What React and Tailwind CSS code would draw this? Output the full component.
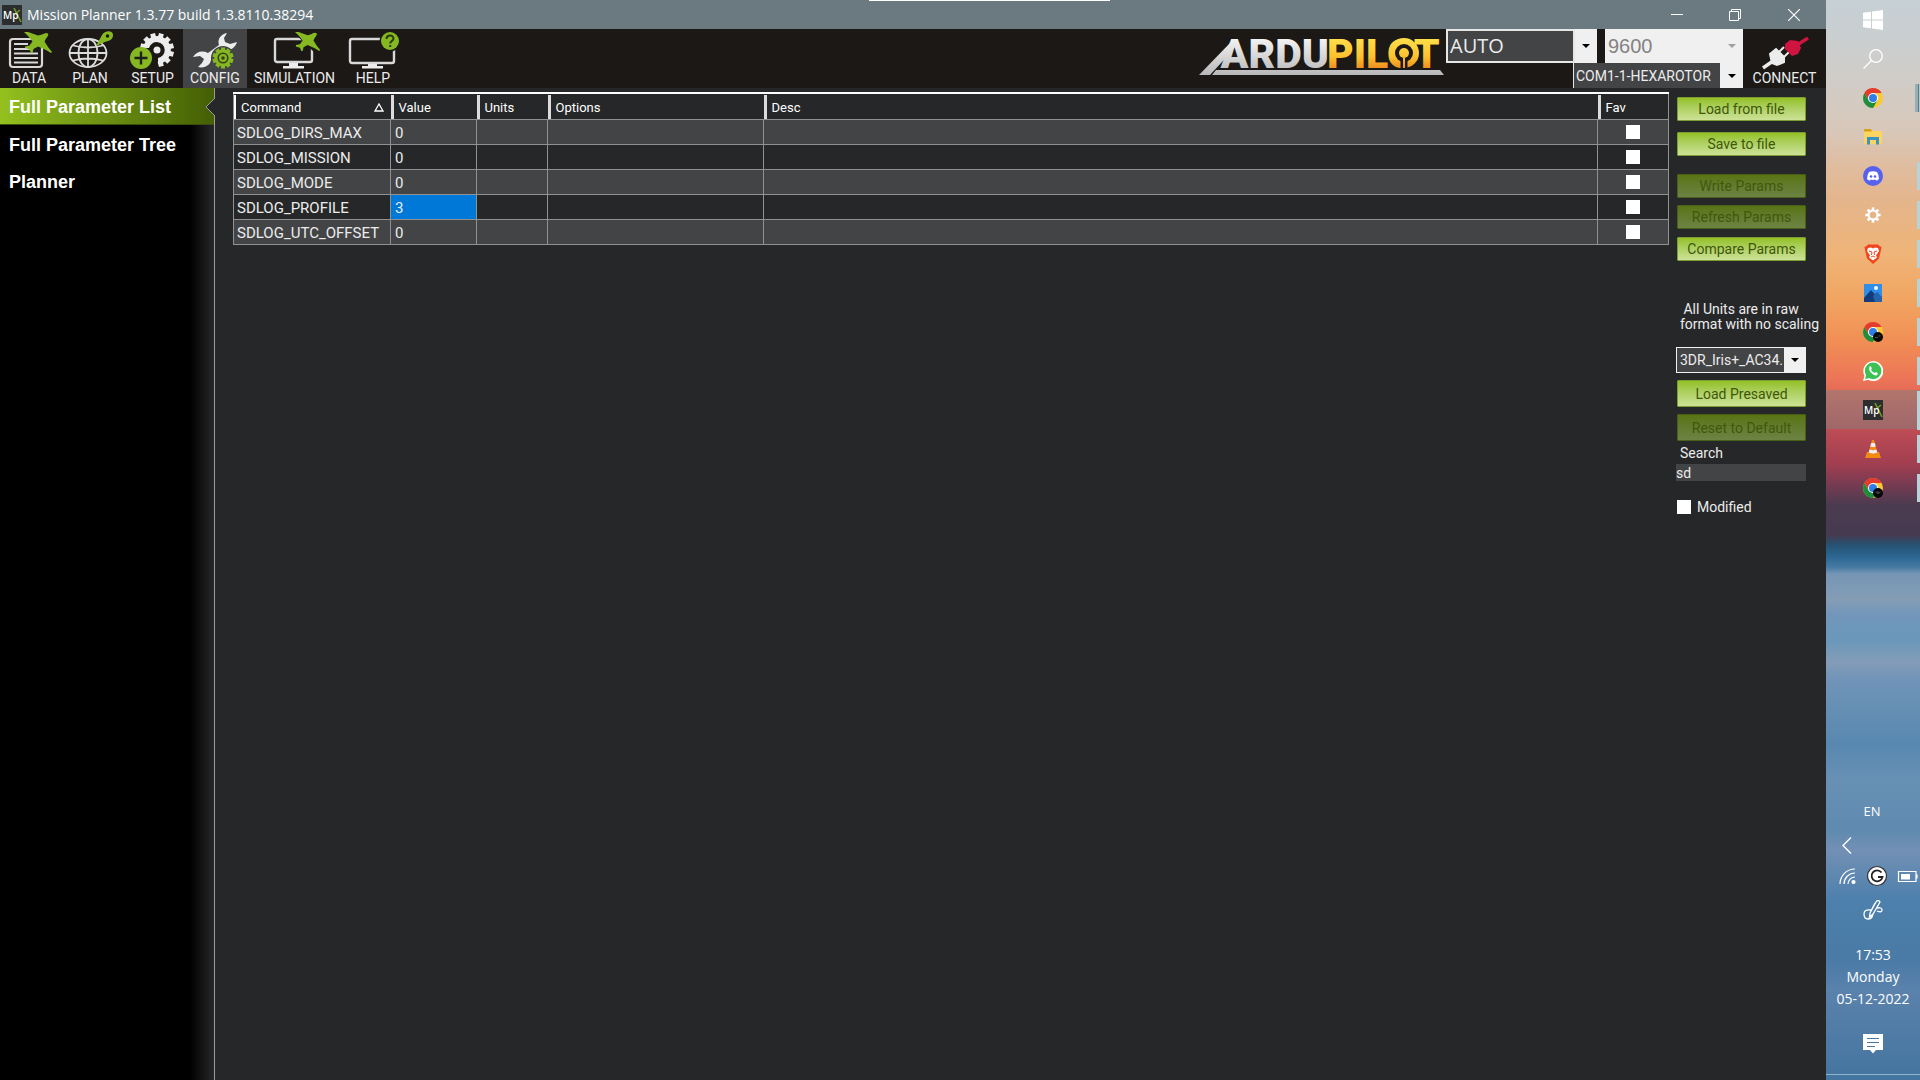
import React from "react";

const rows = [
  ["SDLOG_DIRS_MAX", "0"],
  ["SDLOG_MISSION", "0"],
  ["SDLOG_MODE", "0"],
  ["SDLOG_PROFILE", "3"],
  ["SDLOG_UTC_OFFSET", "0"],
];

const Plane = ({ x, y, s = 1 }) => (
  <g transform={`translate(${x} ${y}) scale(${s})`} fill="#86b822">
    <path d="M0 0 L4 0 L14 3.500 L18 2.500 Q22 0 24 1.500 Q25 3 22 6.500 L20.500 9.500 L24 15 L28 20 L27 21 L22 18 L14 14.500 L9.500 17 L8.500 21 L7 21 L5.500 17.500 L1 16 L1 14.500 L5.500 13.500 L8.500 9.500 L4 4 Z" />
  </g>
);

const teeth = (n, r, w, h) =>
  Array.from({ length: n }, (_, i) => (
    <rect key={i} x={-w / 2} y={-r - h} width={w} height={h + 1.5} transform={`rotate(${(360 / n) * i})`} />
  ));

const DataIcon = () => (
  <svg width="46" height="40" viewBox="0 0 46 40" aria-hidden="true">
    <rect x="4" y="8" width="32" height="28" rx="3" fill="none" stroke="#d8d8d8" strokeWidth="2.200" />
    <path d="M8 13h14M8 18h19M8 22.500h24M8 27h24M8 31.500h24" stroke="#d8d8d8" strokeWidth="1.800" />
    <Plane x={18} y={1} />
  </svg>
);

const PlanIcon = () => (
  <svg width="46" height="40" viewBox="0 0 46 40" fill="none" aria-hidden="true">
    <g stroke="#dcdcdc" strokeWidth="1.800">
      <ellipse cx="21" cy="22" rx="18.500" ry="14" />
      <ellipse cx="21" cy="22" rx="9.500" ry="14" />
      <path d="M21 8v28M2.500 22h37M6 14.500q15 4 30 0M6 29.500q15 -4 30 0" />
    </g>
    <path d="M29 15 L35 4 C38 -1 46 -1 46 4 C46 8 43 10 39 10.500 Z" fill="#86b822" />
    <circle cx="40.500" cy="5" r="1.800" fill="#1b1816" />
  </svg>
);

const SetupIcon = () => (
  <svg width="46" height="40" viewBox="0 0 46 40" aria-hidden="true">
    <g transform="translate(27 19)" fill="#ececec">
      <path d="M-14 -2 A14 14 0 1 1 1 14 L1 8 A8 8 0 1 0 -8 -2 Z" />
      {[-75, -45, -15, 15, 45, 75, 105, 135, 165].map((a) => (
        <rect key={a} x="-2.500" y="-17" width="5" height="5" transform={`rotate(${a})`} />
      ))}
      <circle r="3.500" />
    </g>
    <circle cx="11" cy="27" r="11" fill="#86b822" />
    <path d="M11 20.500v13M4.500 27h13" stroke="#1f1f1c" strokeWidth="2.400" />
  </svg>
);

const ConfigIcon = () => (
  <svg width="46" height="40" viewBox="0 0 46 40" aria-hidden="true">
    <path
      d="M35 2 C29 3 25 8 27 14 L16 22 C10 19 4 21 1 26 L8 25 L12 28 L10 32 L6 36 C13 38 20 33 19 27 L30 18 C36 21 43 18 45 11 L38 13 L33 11 L32 7 Z"
      fill="#ececec"
    />
    <g transform="translate(31 27)">
      <circle r="12" fill="#434446" />
      <g fill="#86b822">
        <circle r="8.500" />
        {teeth(10, 8, 4, 2.5)}
      </g>
      <circle r="4.800" fill="none" stroke="#39421c" strokeWidth="1.600" />
      <circle r="1.800" fill="#39421c" />
    </g>
  </svg>
);

const SimIcon = () => (
  <svg width="50" height="40" viewBox="0 0 50 40" aria-hidden="true">
    <rect x="5" y="8" width="37" height="23" rx="2" fill="none" stroke="#d8d8d8" strokeWidth="2.400" />
    <path d="M19 32h9v3h6v2.500h-21v-2.500h6z" fill="#ececec" />
    <path d="M27 0 L50 22" stroke="#1b1816" strokeWidth="7" />
    <Plane x={25} y={1} s={0.9} />
  </svg>
);

const HelpIcon = () => (
  <svg width="52" height="40" viewBox="0 0 52 40" aria-hidden="true">
    <rect x="3" y="8" width="44" height="24" rx="2" fill="none" stroke="#d8d8d8" strokeWidth="2.400" />
    <path d="M21 33h9v2h6v2.500h-21v-2.500h6z" fill="#ececec" />
    <circle cx="43" cy="10" r="10.500" fill="#1b1816" />
    <circle cx="43" cy="10" r="9" fill="#86b822" />
    <path d="M39.500 8c0-4.500 7-4.500 7-.5 0 2.500-3.300 2.500-3.300 5M43.200 14v2" fill="none" stroke="#2c3a10" strokeWidth="2" />
  </svg>
);

const PlugIcon = () => (
  <svg width="50" height="34" viewBox="0 0 50 34" aria-hidden="true">
    <path d="M3 31 L13 24" stroke="#ececec" strokeWidth="3.500" />
    <path d="M10 17 L16 12 L24 20 L24 25 L17 28 L12 26 Z" fill="#ececec" stroke="#ececec" strokeWidth="2" />
    <path d="M19 15 L24 10 M24 20 L29 15" stroke="#ececec" strokeWidth="2" />
    <path d="M25 7 L30 3 L38 4 L41 11 L38 17 L32 19 L25 12 Z" fill="#cf1440" />
    <path d="M37 8 L48 1" stroke="#cf1440" strokeWidth="3.500" />
  </svg>
);

const Logo = () => (
  <svg width="248" height="56" viewBox="0 -8 248 56" role="img" aria-label="ArduPilot" fontFamily="Roboto, sans-serif" fontWeight="900" fontSize="41">
    <defs>
      <linearGradient id="gold" gradientUnits="userSpaceOnUse" x1="0" y1="1" x2="0" y2="32">
        <stop offset="0" stopColor="#ffe04a" />
        <stop offset="0.600" stopColor="#fbc22e" />
        <stop offset="1" stopColor="#f08a1e" />
      </linearGradient>
      <linearGradient id="silver" gradientUnits="userSpaceOnUse" x1="0" y1="1" x2="0" y2="38">
        <stop offset="0" stopColor="#f4f4f4" />
        <stop offset="1" stopColor="#b8b8ba" />
      </linearGradient>
    </defs>
    <path d="M1 38 L33 5 L40 2 L34 14 L12 38 Z M18 33 H242 L246 38 H14 Z" fill="url(#silver)" />
    <text x="131" y="31" textAnchor="end" fill="url(#silver)">ARDU</text>
    <text x="129" y="31" fill="url(#gold)">PILOT</text>
    <circle cx="206" cy="16" r="15" fill="url(#gold)" />
    <circle cx="206" cy="16" r="9" fill="#1b1816" />
    <path d="M206 16 V32" stroke="#1b1816" strokeWidth="7" />
    <circle cx="206" cy="16" r="5" fill="url(#gold)" />
    <rect x="205" y="21" width="2" height="10" fill="url(#gold)" />
  </svg>
);

const MpIcon = () => (
  <svg width="20" height="20" viewBox="0 0 20 20" aria-hidden="true">
    <rect width="20" height="20" fill="#2b2d2e" />
    <path d="M12 3 L19 17 M13 9 L18 5" stroke="#6f9a26" strokeWidth="1.600" />
    <text x="1" y="14" fontSize="10" fontWeight="600" fill="#fff" fontFamily="Open Sans, sans-serif">Mp</text>
  </svg>
);

const Chrome = ({ badge }) => (
  <svg width="20" height="20" viewBox="0 0 20 20" aria-hidden="true">
    <circle cx="10" cy="10" r="10" fill="#fcc934" />
    <path d="M10 5 H18.660 A10 10 0 0 0 1.340 5 L5.670 12.500 Z" fill="#e33b2e" />
    <path d="M1.340 5 A10 10 0 0 0 10 20 L14.330 12.500 H5.670 Z" fill="#1e8e3e" />
    <circle cx="10" cy="10" r="5" fill="#fff" />
    <circle cx="10" cy="10" r="4" fill="#2f7de8" />
    {badge && (
      <>
        <circle cx="15" cy="15" r="5" fill="#080808" />
        <path d={badge === 1 ? "M12 15.500h3M15.500 14h2" : "M12.500 14q2.500 3 5 0M14 14h2"} stroke="#666" strokeWidth="0.800" fill="none" />
      </>
    )}
  </svg>
);

const taskIcons = [
  <svg width="20" height="20" viewBox="0 0 20 20" fill="#fff" aria-hidden="true">
    <path d="M0 2.800 L8 1.700 V9.500 H0Z M9 1.500 L20 0 V9.500 H9Z M0 10.500 H8 V18.300 L0 17.200Z M9 10.500 H20 V20 L9 18.500Z" />
  </svg>,
  <svg width="20" height="20" viewBox="0 0 20 20" fill="none" stroke="#fff" strokeWidth="1.300" aria-hidden="true">
    <circle cx="13" cy="7" r="6.300" />
    <path d="M8.500 11.500 L0.500 19.500" />
  </svg>,
  <Chrome />,
  <svg width="20" height="20" viewBox="0 0 20 20" aria-hidden="true">
    <path d="M1 2 H8 L9.500 4 H19 V17 H1Z" fill="#fbd560" />
    <path d="M1 2 H8 L9 4.500 H1Z" fill="#d9a013" />
    <path d="M4 17.500 V10 H16 V17.500 H13 V13 H7 V17.500Z" fill="#3b93c8" />
  </svg>,
  <svg width="20" height="20" viewBox="0 0 20 20" aria-hidden="true">
    <circle cx="10" cy="10" r="10" fill="#5661ee" />
    <path d="M6 6 Q10 4.500 14 6 Q16 9 16 13 Q14.500 14.500 13 14.600 L12.300 13.600 Q10 14.200 7.700 13.600 L7 14.600 Q5.500 14.500 4 13 Q4 9 6 6Z" fill="#fff" />
    <circle cx="8" cy="10.500" r="1.300" fill="#5661ee" />
    <circle cx="12" cy="10.500" r="1.300" fill="#5661ee" />
  </svg>,
  <svg width="20" height="20" viewBox="-10 -10 20 20" aria-hidden="true">
    <circle r="4.600" fill="none" stroke="#fff" strokeWidth="1.800" />
    <g fill="#fff">{teeth(8, 5, 2.6, 2.6)}</g>
  </svg>,
  <svg width="20" height="20" viewBox="0 0 20 20" aria-hidden="true">
    <path d="M5 0.500 H15 L16.500 2 L18.500 3 L18 6 L16 14.500 L10 20 L4 14.500 L2 6 L1.500 3 L3.500 2Z" fill="#f3451d" />
    <path d="M5 4 L8 3.500 L10 4.500 L12 3.500 L15 4 L16 7 L13 11.500 L14 13.500 L10 16.500 L6 13.500 L7 11.500 L4 7Z" fill="#fff" />
    <path d="M6 7 L9 8 L8.500 11 M14 7 L11 8 L11.500 11 M8 13 L10 12 L12 13" fill="none" stroke="#f3451d" strokeWidth="1" />
  </svg>,
  <svg width="20" height="20" viewBox="0 0 20 20" aria-hidden="true">
    <path d="M1 1 H19 V19 H1Z" fill="#2f8fe8" />
    <path d="M1 15 L8 7 L19 19 H1Z" fill="#123d7c" />
    <path d="M10 13 L14 9 L19 14 V19 H12Z" fill="#2563ad" />
    <circle cx="13" cy="5" r="2" fill="#f3f8ff" />
  </svg>,
  <Chrome badge={1} />,
  <svg width="20" height="20" viewBox="0 0 20 20" aria-hidden="true">
    <path d="M0 20 L1.500 14.800 A10 10 0 1 1 5.200 18.700Z" fill="#fff" />
    <circle cx="10.100" cy="9.900" r="8.300" fill="#3cc254" />
    <path d="M2 18 L3.500 13 L7 17Z" fill="#3cc254" />
    <path d="M6.500 5.500 Q8 4.500 8.700 7 Q9 8 8 8.700 Q9.300 11 11.600 12 L12.600 11 Q15.500 12 14.500 13.500 Q13 15.500 9.500 13 Q5 9.500 6.500 5.500Z" fill="#fff" />
  </svg>,
  <MpIcon />,
  <svg width="20" height="20" viewBox="0 0 20 20" aria-hidden="true">
    <path d="M4 13 H16 L18 19 H2Z" fill="#f28a12" />
    <path d="M9 1 H11 L14.500 14 Q10 16.500 5.500 14Z" fill="#f08a1c" />
    <path d="M8.200 4 H11.800 L12.700 7.500 Q10 8.500 7.300 7.500Z M6.600 10.500 Q10 12 13.400 10.500 L14.300 13.500 Q10 15.500 5.700 13.500Z" fill="#eee" />
  </svg>,
  <Chrome badge={2} />,
];
const taskNames = ["Start", "Search", "Chrome", "File Explorer", "Discord", "Settings", "Brave", "Photos", "Chrome profile 2", "WhatsApp", "Mission Planner", "VLC", "Chrome profile 3"];

const tools = [
  ["DATA", <DataIcon />, "w-[58px]"],
  ["PLAN", <PlanIcon />, "w-[64px]"],
  ["SETUP", <SetupIcon />, "w-[61px]"],
  ["CONFIG", <ConfigIcon />, "w-[64px] bg-[#434446]"],
  ["SIMULATION", <SimIcon />, "w-[95px]"],
  ["HELP", <HelpIcon />, "w-[62px]"],
];

const Arrow = ({ className = "text-black" }) => (
  <svg width="8" height="4" viewBox="0 0 8 4" className={className} aria-hidden="true">
    <path d="M0 0H8L4 4Z" fill="currentColor" />
  </svg>
);

function Combo({ label, value, box, select, arrow, disabled }) {
  return (
    <div className={`flex ${box}`}>
      <select aria-label={label} disabled={disabled} className={`min-w-0 flex-1 appearance-none overflow-hidden whitespace-nowrap opacity-100 outline-none ${select}`}>
        <option>{value}</option>
      </select>
      <span className={`flex shrink-0 items-center justify-center bg-[#f0f0f0] ${arrow}`}>
        <Arrow className={disabled ? "text-[#a0a0a0]" : "text-black"} />
      </span>
    </div>
  );
}

function GreenButton({ children, className, disabled }) {
  return (
    <button
      type="button"
      disabled={disabled}
      className={`block w-[129px] rounded-[1px] border text-sm leading-4 ${
        disabled
          ? "border-[#4a5f1a] bg-linear-to-b from-[#587410] to-[#6d8344] text-[#40580b]"
          : "border-[#7c9c34] bg-linear-to-b from-[#94c11f] to-[#cde296] text-[#40570a]"
      } ${className}`}
    >
      {children}
    </button>
  );
}

function Th({ children, className = "", first }) {
  return (
    <th scope="col" className={`h-[26px] border-b border-[#919191] p-0 text-left font-normal ${className}`}>
      <div className={`mt-px flex h-[24px] items-center justify-between pt-px pr-[7px] pl-[5px] ${first ? "border-l-2 border-white" : "border-l-3 border-[#dcdcdc]"}`}>
        {children}
      </div>
    </th>
  );
}

export default function App() {
  return (
    <div className="flex min-h-screen bg-[#262729] font-[Roboto,'Liberation_Sans',sans-serif] text-[#ececec]">
      <div className="flex min-w-0 flex-1 flex-col">
        <header className="relative flex h-[29px] items-center bg-[#6a7a80] pl-[2px] text-white">
          <MpIcon />
          <h1 className="ml-[5px] flex-1 font-['Open_Sans',sans-serif] text-sm">Mission Planner 1.3.77 build 1.3.8110.38294</h1>
          <div className="absolute top-0 left-[869px] h-px w-[241px] bg-white" />
          <button type="button" aria-label="Minimize" className="flex h-full w-[62px] items-center justify-center">
            <svg width="12" height="12" viewBox="0 0 12 12" stroke="#fff"><path d="M0 5.500h12" /></svg>
          </button>
          <button type="button" aria-label="Restore" className="flex h-full w-[54px] items-center justify-center">
            <svg width="12" height="12" viewBox="0 0 12 12" fill="none" stroke="#fff"><path d="M0.500 2.500h9v9h-9zM2.500 2.500v-2h9v9h-2" /></svg>
          </button>
          <button type="button" aria-label="Close" className="flex h-full w-[64px] items-center justify-center">
            <svg width="12" height="12" viewBox="0 0 12 12" stroke="#fff" strokeWidth="1.200"><path d="M0 0L12 12M12 0L0 12" /></svg>
          </button>
        </header>

        <div className="flex h-[59px] bg-[#1b1816]">
          <nav className="flex flex-1">
            {tools.map(([name, icon, cls]) => (
              <button key={name} type="button" className={`flex flex-col items-center pt-[2px] text-sm ${cls}`}>
                {icon}
                <span className="leading-[14px]">{name}</span>
              </button>
            ))}
          </nav>
          <div><Logo /></div>
          <div className="flex w-[297px] flex-col items-end">
            <div className="flex w-full justify-between">
              <Combo
                label="Connection"
                value="AUTO"
                box="h-[34px] w-[151px]"
                select="border-2 border-[#e6e6e6] bg-[#434446] pl-[2px] font-['Open_Sans',sans-serif] text-xl leading-7"
                arrow="w-[22px]"
              />
              <Combo label="Baud rate" value="9600" disabled box="h-[34px] w-[138px] bg-[#f0f0f0]" select="pl-[3px] font-['Liberation_Sans',sans-serif] text-xl text-[#838383]" arrow="w-[22px]" />
            </div>
            <Combo
              label="Vehicle"
              value="COM1-1-HEXAROTOR"
              box="h-[25px] w-[170px]"
              select="border-l border-[#e6e6e6] bg-[#434446] pl-[2px] text-sm"
              arrow="w-[23px]"
            />
          </div>
          <button type="button" className="flex w-[83px] flex-col items-center pt-2 text-sm">
            <PlugIcon />
            <span className="leading-[14px]">CONNECT</span>
          </button>
        </div>

        <div className="flex flex-1">
          <aside className="w-[215px] border-r border-[#9a9a9a] bg-[linear-gradient(to_right,#000_190px,#262729)] font-['Liberation_Sans',sans-serif] text-lg font-bold text-white">
            <a href="#list" className="relative flex h-[37px] items-center border-b border-[#3b4d10] bg-linear-to-r from-[#94c11f] to-[#445f05] pl-[9px] pt-px">
              Full Parameter List
              <svg width="10" height="18" viewBox="0 0 10 18" className="absolute -right-px top-[10px]">
                <path d="M10 0L1 9L10 18Z" fill="#262729" />
                <path d="M10 0L1 9L10 18" fill="none" stroke="#9a9a9a" />
              </svg>
            </a>
            <a href="#tree" className="flex h-[38px] items-center pl-[9px] pt-px">Full Parameter Tree</a>
            <a href="#planner" className="flex h-[37px] items-center pl-[9px] pt-px">Planner</a>
          </aside>

          <main className="flex min-w-0 flex-1 items-start pl-[18px]">
            <table className="mt-1 min-w-0 flex-1 table-fixed border-collapse border border-[#919191] text-[15px]">
              <thead className="border-t-2 border-white text-[13px] text-white">
                <tr>
                  <Th first className="w-[157px]">
                    Command
                    <svg width="10" height="9" viewBox="0 0 10 9" fill="none" stroke="#fff" strokeWidth="1.300"><path d="M1 8L5 1L9 8Z" /></svg>
                  </Th>
                  <Th className="w-[86px]">Value</Th>
                  <Th className="w-[71px]">Units</Th>
                  <Th className="w-[216px]">Options</Th>
                  <Th>Desc</Th>
                  <Th className="w-[71px]">Fav</Th>
                </tr>
              </thead>
              <tbody>
                {rows.map(([name, value], i) => (
                  <tr key={name} className={`h-[25px] ${i % 2 ? "bg-[#262729]" : "bg-[#434446]"}`}>
                    <td className="border border-[#919191] pt-px pb-0 pl-[3px] leading-5">{name}</td>
                    <td className={`border border-[#919191] pt-px pb-0 pl-1 leading-5 ${value === "3" ? "bg-[#0078d7]" : ""}`}>{value}</td>
                    <td className="border border-[#919191]" />
                    <td className="border border-[#919191]" />
                    <td className="border border-[#919191]" />
                    <td className="border border-[#919191] p-0">
                      <input type="checkbox" aria-label={`Favourite ${name}`} className="mx-auto block size-[14px] appearance-none bg-white" />
                    </td>
                  </tr>
                ))}
              </tbody>
            </table>

            <section className="flex w-[157px] shrink-0 flex-col pl-2 pt-[9px]">
              <GreenButton className="h-6">Load from file</GreenButton>
              <GreenButton className="mt-[11px] h-6">Save to file</GreenButton>
              <GreenButton disabled className="mt-[18px] h-6">Write Params</GreenButton>
              <GreenButton disabled className="mt-[7px] h-6">Refresh Params</GreenButton>
              <GreenButton className="mt-[8px] h-6">Compare Params</GreenButton>
              <p className="mt-[41px] whitespace-pre pl-[3px] text-sm leading-[15px]">{" All Units are in raw\nformat with no scaling"}</p>
              <Combo
                label="Presaved parameters"
                value="3DR_Iris+_AC34."
                box="mt-[15px] -ml-px h-[26px] w-[130px] border border-[#f0f0f0]"
                select="bg-[#434446] pl-[3px] text-sm"
                arrow="w-[21px]"
              />
              <GreenButton className="mt-[7px] h-[27px]">Load Presaved</GreenButton>
              <GreenButton disabled className="mt-[7px] h-[27px]">Reset to Default</GreenButton>
              <label htmlFor="search" className="mt-[2px] pl-[3px] text-sm leading-5">Search</label>
              <input id="search" type="text" defaultValue="sd" className="mt-px -ml-px h-[17px] w-[130px] bg-[#434446] text-sm leading-4 outline-none" />
              <label className="mt-[16px] flex items-center gap-[6px] text-sm leading-5">
                <input type="checkbox" className="size-[14px] appearance-none bg-white" />
                Modified
              </label>
            </section>
          </main>
        </div>
      </div>

      <aside className="flex w-[94px] shrink-0 flex-col bg-[linear-gradient(to_bottom,#c5d0d6_0px,#cfcdca_70px,#d8c8ba_130px,#dfbda0_165px,#e4b58c_200px,#efb477_255px,#f1a561_300px,#f18f55_340px,#ec7457_380px,#d35c56_410px,#b84a54_435px,#a03e50_465px,#763b52_485px,#4b3b50_505px,#463a50_535px,#27506f_544px,#2a6590_556px,#457aa2_567px,#7696b6_574px,#849db5_600px,#7296ba_615px,#6a98ba_640px,#839cb8_662px,#7094b8_680px,#5888b0_745px,#6890b5_780px,#5f8ab0_830px,#7290b4_850px,#4d80ac_900px,#4a7aa6_960px,#5a82ac_990px,#44759f_1080px)] font-['Open_Sans',sans-serif] text-white">
        <nav>
          {taskIcons.map((icon, i) => (
            <button
              key={taskNames[i]}
              type="button"
              aria-label={taskNames[i]}
              className={`relative flex h-[39px] w-full items-center justify-center ${i > 1 ? "pt-px" : ""} ${i === 10 ? "bg-[#808080]/50" : ""}`}
            >
              {icon}
              {i === 2 && <span className="absolute right-0 h-7 w-[5px] border-r border-[#b8c8cc] bg-[linear-gradient(to_right,#97aeb4_3px,#4f7f8c_3px)]" />}
              {i > 3 && <span className={`absolute right-0 w-[3px] bg-[#b5d3d8] ${i === 10 ? "h-full" : "h-7"}`} />}
            </button>
          ))}
        </nav>
        <div className="mt-auto flex flex-col items-center pb-5 text-sm leading-[22px]">
          <span className="pr-[2px] text-[13px]">EN</span>
          <svg width="94" height="24" viewBox="0 0 94 24" fill="none" stroke="#fff" strokeWidth="1.400" className="mt-3" aria-hidden="true">
            <path d="M25 3.500L17 11.500L25 19.500" />
          </svg>
          <svg width="94" height="24" viewBox="0 0 94 24" fill="none" stroke="#fff" strokeWidth="1.200" className="mt-[6px]" aria-hidden="true">
            <path d="M14 20A15 15 0 0 1 29 5M18 20A11 11 0 0 1 29 9M22 20A7 7 0 0 1 29 13" />
            <circle cx="27.500" cy="18" r="1.500" fill="#fff" />
            <circle cx="51" cy="12" r="9.500" fill="#fff" stroke="#333" />
            <path d="M55.500 8.500A5.500 5.500 0 1 0 56.500 13H52" stroke="#222" strokeWidth="1.800" />
            <path d="M72.500 7.500H90V17.500H72.500ZM91 10.500V14.500" />
            <path d="M75 10H84V15.500H75Z" fill="#fff" stroke="none" />
          </svg>
          <svg width="20" height="20" viewBox="0 0 20 20" fill="none" stroke="#fff" strokeWidth="1.300" className="mt-3" aria-hidden="true">
            <path d="M7 13L13 2Q15 -1 17 2L10 14L6.500 17ZM12 3L7 13M8 10Q1 9 1 14Q1 19 5 19Q9 19 10 14M14 8Q19 7 19 10Q19 13 14 11" />
          </svg>
          <time className="mt-[24px] flex flex-col items-center">
            <span>17:53</span>
            <span>Monday</span>
            <span>05-12-2022</span>
          </time>
          <svg width="20" height="20" viewBox="0 0 20 20" className="mt-6" aria-hidden="true">
            <path d="M0 0H20V16H13L10 19.500L7 16H0Z" fill="#fff" />
            <path d="M4 4.500H16M4 8.500H16M4 12.500H12" stroke="#47779f" strokeWidth="1.200" />
          </svg>
        </div>
        <div className="mb-[5px] h-px bg-[#8fb3cc]" />
      </aside>
    </div>
  );
}
